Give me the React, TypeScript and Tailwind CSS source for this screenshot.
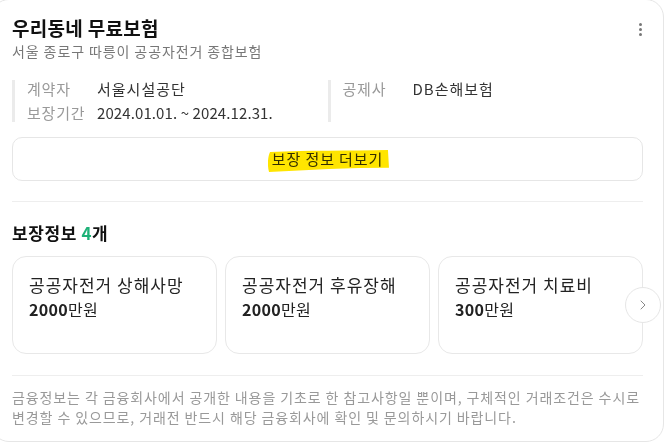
import { ChevronRight } from "lucide-react";

const font = { fontFamily: '"Noto Sans CJK KR", "Noto Sans", sans-serif' };

interface Coverage {
  name: string;
  amount: string;
}

const coverages: Coverage[] = [
  { name: "공공자전거 상해사망", amount: "2000" },
  { name: "공공자전거 후유장해", amount: "2000" },
  { name: "공공자전거 치료비", amount: "300" },
];

// third item: true when the value is latin/digits (no extra letter spacing)
function InfoColumn({ rows }: { rows: [string, string, boolean?][] }) {
  return (
    <div className="flex">
      <div className="w-[3px] bg-[#ebebeb] my-[3px]" />
      <div className="flex flex-col pl-3">
        {rows.map(([label, value, latin]) => (
          <div key={label} className="flex text-[15px] leading-6">
            <span className="w-[70px] text-[#999] tracking-[0.8px]">{label}</span>
            <span className={latin ? "text-[#333] tracking-[0.1px]" : "text-[#333] tracking-[1px]"}>
              {value}
            </span>
          </div>
        ))}
      </div>
    </div>
  );
}

function CoverageCard({ item }: { item: Coverage }) {
  return (
    <div className="h-[98px] border border-[#e8e8e8] rounded-[14px] px-4 pt-[16px]">
      <p className="text-[17px] leading-6 text-[#222] tracking-[1px]">{item.name}</p>
      <p className="text-[16px] leading-6 text-[#222] tracking-[0.3px]">
        <b className="font-bold">{item.amount}</b>만원
      </p>
    </div>
  );
}

export default function App() {
  return (
    <div className="w-[665px] h-[442px] overflow-hidden bg-white" style={font}>
      <div className="-ml-[9px] -mt-px w-[673px] border border-[#e6e6e6] rounded-[18px] px-5 pt-[15px] pb-[14px] bg-white">
        <div className="flex justify-between">
          <div>
            <h1 className="text-[19px] leading-[26px] font-bold text-[#111] tracking-[0.3px]">
              우리동네 무료보험
            </h1>
            <p className="text-[14px] leading-5 text-[#777] tracking-[0.9px]">
              서울 종로구 따릉이 공공자전거 종합보험
            </p>
          </div>
          <div className="flex flex-col gap-[2px] pt-[8px] pr-[1px]">
            <span className="w-[3px] h-[3px] rounded-full bg-[#777]" />
            <span className="w-[3px] h-[3px] rounded-full bg-[#777]" />
            <span className="w-[3px] h-[3px] rounded-full bg-[#777]" />
          </div>
        </div>

        <div className="grid grid-cols-2 mt-4">
          <InfoColumn
            rows={[
              ["계약자", "서울시설공단"],
              ["보장기간", "2024.01.01. ~ 2024.12.31.", true],
            ]}
          />
          <InfoColumn rows={[["공제사", "DB손해보험"]]} />
        </div>

        <button className="mt-3 w-full h-[44px] border border-[#e6e6e6] rounded-[10px] flex items-center justify-center">
          <span className="relative text-[15px] leading-5 text-[#333] tracking-[0.9px]">
            보장 정보 더보기
            <svg
              className="absolute -left-[4px] top-[1px] mix-blend-multiply"
              width="122"
              height="23"
              viewBox="0 0 120 22"
              preserveAspectRatio="none"
            >
              <path
                d="M2 2 C 40 0, 80 1, 118 0 L 119 17 C 80 17, 40 19, 1 21 C -1 14, 0 6, 2 2 Z"
                fill="#ffe500"
              />
            </svg>
          </span>
        </button>

        <div className="mt-5 h-px bg-[#eeeeee]" />

        <h2 className="mt-5 text-[17px] leading-[22px] font-bold text-[#111] tracking-[0.6px]">
          보장정보 <span className="text-[#1db177]">4</span>개
        </h2>

        <div className="relative mt-3 grid grid-cols-3 gap-2">
          {coverages.map((c) => (
            <CoverageCard key={c.name} item={c} />
          ))}
          <div className="absolute right-[-18px] top-[31px] w-9 h-9 rounded-full border border-[#e6e6e6] bg-white flex items-center justify-center">
            <ChevronRight size={16} strokeWidth={1.5} color="#888" />
          </div>
        </div>

        <div className="mt-[21px] h-px bg-[#eeeeee]" />

        <p className="mt-[11px] text-[14px] leading-5 text-[#999] whitespace-nowrap tracking-[0.9px]">
          금융정보는 각 금융회사에서 공개한 내용을 기초로 한 참고사항일 뿐이며, 구체적인 거래조건은 수시로
          <br />
          변경할 수 있으므로, 거래전 반드시 해당 금융회사에 확인 및 문의하시기 바랍니다.
        </p>
      </div>
    </div>
  );
}
